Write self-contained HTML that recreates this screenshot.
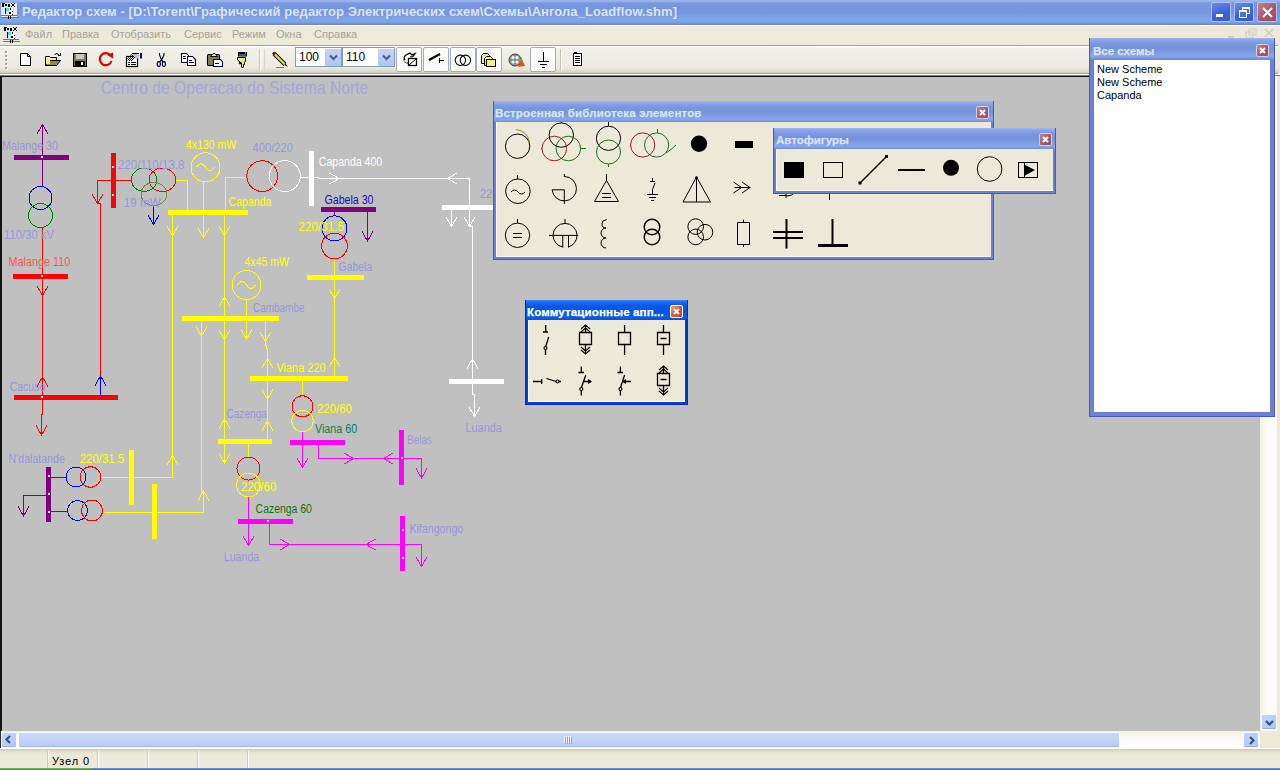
<!DOCTYPE html><html><head><meta charset="utf-8"><style>

*{margin:0;padding:0;box-sizing:border-box}
html,body{width:1280px;height:770px;overflow:hidden;background:#ECE9D8;font-family:"Liberation Sans",sans-serif;position:relative}
.a{position:absolute}
#title{left:0;top:0;width:1280px;height:25px;background:linear-gradient(#9CB8F2 0px,#93AFEE 1.5px,#7A98DC 3px,#7795DE 6px,#7897E0 14px,#7BA0E4 17px,#7AA8E6 19px,#7AA6E6 22px,#7890D6 23.5px,#6E80C0 25px)}
#ttext{left:22px;top:4px;font-weight:bold;font-size:13px;color:#D8E4F8;white-space:nowrap;letter-spacing:0.07px}
.tb{top:2px;width:20px;height:20px;border:1px solid #B0C2F0;border-radius:2px;background:linear-gradient(160deg,#6A8CE8,#3D62D8 55%,#3A5ED0)}
#menu{left:0;top:25px;width:1280px;height:20px;background:linear-gradient(90deg,#ECE9D8,#EEEBDB 50%,#ECE9D8);border-top:1px solid #FFFFFF}
.mi{top:28px;font-size:11px;color:#A5A39A;white-space:nowrap}
#tbar{left:0;top:45px;width:1278px;height:29px;background:linear-gradient(#FFFFFF 0px,#FFFFFF 1px,#F1F0EA 2px,#EFEEE6 50%,#ECEADF 80%,#DAD7C8 96%,#D0CDBC);border-top:1px solid #A6A498;border-bottom:1px solid #ABA898}
#tbline{left:0;top:74px;width:1280px;height:2px;background:linear-gradient(#FFFFFF 50%,#7A7A76 50%)}
#canvas{left:0;top:76px;width:1260px;height:655px;background:#C0C0C0;border-top:1px solid #141414;border-left:2px solid #141414}
#hscroll{left:0;top:731px;width:1260px;height:17px;background:linear-gradient(#F1EFE5,#FBFAF6 40%,#FEFEFC)}
#vscroll{left:1260px;top:76px;width:17px;height:655px;background:linear-gradient(90deg,#F1EFE5,#FBFAF6 40%,#FEFEFC)}
#corner{left:1260px;top:731px;width:18px;height:17px;background:#ECE9D8}
#status{left:0;top:748px;width:1280px;height:20px;background:linear-gradient(#FFFFFF 0px,#FFFFFF 1px,#C8C4B0 1px,#D8D4C2 2px,#E6E3D2 4px,#ECE9D8 7px,#ECE9D8)}
.sep{top:751px;width:2px;height:17px;border-left:1px solid #CFCBB8;border-right:1px solid #FFFFFF}
#taskbar{left:0;top:768px;width:1280px;height:2px;background:linear-gradient(#7FA3E0,#2E56B0)}
.sbtn{width:16px;height:16px;border:1px solid #F8FAFF;border-radius:2px;background:linear-gradient(135deg,#C4D4FA,#B8CCF8 60%,#AEC4F4);box-shadow:inset 0 -1px 0 #9CAED8}
.combo{top:47px;height:20px;background:#fff;border:1px solid #7F9DB9}
.cbtn{top:1px;width:16px;height:17px;background:linear-gradient(#C6D3F7,#B0C4F3);border-radius:1px}
.cval{left:3px;top:2px;font-size:12px;color:#000}
.pbtn{top:47px;width:26px;height:25px;border:1px solid #A4ACB8;border-radius:2px;background:#FBFBFA}

</style></head><body>
<div id="title" class="a"></div>
<svg class="a" style="left:0px;top:0px" width="20" height="21" shape-rendering="crispEdges"><rect x="1" y="3" width="16" height="14" fill="#E8E4EC"/>
<rect x="2" y="3" width="2" height="4" fill="#000"/><rect x="2" y="3" width="3" height="1" fill="#000"/><rect x="5" y="4" width="2" height="2" fill="#000"/><rect x="8" y="4" width="2" height="3" fill="#000"/><rect x="11" y="3" width="1" height="1" fill="#000"/><rect x="14" y="3" width="1" height="1" fill="#000"/><rect x="12" y="4" width="2" height="2" fill="#000"/><rect x="11" y="6" width="1" height="1" fill="#000"/><rect x="14" y="6" width="1" height="1" fill="#000"/>
<rect x="5" y="8" width="1" height="6" fill="#000"/><rect x="6" y="8" width="3" height="6" fill="#40E8C8"/><rect x="6" y="11" width="3" height="3" fill="#C0F4EC"/><rect x="9" y="8" width="4" height="8" fill="#FFFFFF"/><rect x="10" y="8" width="1" height="2" fill="#000"/><rect x="12" y="11" width="1" height="1" fill="#000"/><rect x="9" y="12" width="2" height="2" fill="#000"/><rect x="12" y="14" width="1" height="1" fill="#000"/>
<rect x="1" y="15" width="16" height="1" fill="#E04858"/><rect x="1" y="17" width="17" height="1" fill="#E04858"/><rect x="8" y="16" width="1" height="3" fill="#000"/><rect x="10" y="16" width="1" height="3" fill="#000"/></svg>
<div id="ttext" class="a">Редактор схем - [D:\Torent\Графический редактор Электрических схем\Схемы\Ангола_Loadflow.shm]</div>
<div class="a tb" style="left:1211px"><div class="a" style="left:4px;top:11px;width:7px;height:3px;background:#fff"></div></div>
<div class="a tb" style="left:1234px"><div class="a" style="left:7px;top:4px;width:8px;height:7px;border:1px solid #fff;border-top-width:2px"></div><div class="a" style="left:4px;top:7px;width:8px;height:8px;border:1px solid #fff;border-top-width:2px;background:#4E74DE"></div></div>
<div class="a tb" style="left:1257px;background:linear-gradient(135deg,#C8808E,#A85468 60%,#9A4C64)"><svg class="a" style="left:3px;top:3px" width="13" height="13"><path d="M2,2 L11,11 M11,2 L2,11" stroke="#fff" stroke-width="2"/></svg></div>
<div id="menu" class="a"></div>
<svg class="a" style="left:2px;top:24px" width="20" height="21" shape-rendering="crispEdges"><rect x="1" y="3" width="16" height="14" fill="#E8E4EC"/>
<rect x="2" y="3" width="2" height="4" fill="#000"/><rect x="2" y="3" width="3" height="1" fill="#000"/><rect x="5" y="4" width="2" height="2" fill="#000"/><rect x="8" y="4" width="2" height="3" fill="#000"/><rect x="11" y="3" width="1" height="1" fill="#000"/><rect x="14" y="3" width="1" height="1" fill="#000"/><rect x="12" y="4" width="2" height="2" fill="#000"/><rect x="11" y="6" width="1" height="1" fill="#000"/><rect x="14" y="6" width="1" height="1" fill="#000"/>
<rect x="5" y="8" width="1" height="6" fill="#000"/><rect x="6" y="8" width="3" height="6" fill="#40E8C8"/><rect x="6" y="11" width="3" height="3" fill="#C0F4EC"/><rect x="9" y="8" width="4" height="8" fill="#FFFFFF"/><rect x="10" y="8" width="1" height="2" fill="#000"/><rect x="12" y="11" width="1" height="1" fill="#000"/><rect x="9" y="12" width="2" height="2" fill="#000"/><rect x="12" y="14" width="1" height="1" fill="#000"/>
<rect x="1" y="15" width="16" height="1" fill="#E04858"/><rect x="1" y="17" width="17" height="1" fill="#E04858"/><rect x="8" y="16" width="1" height="3" fill="#000"/><rect x="10" y="16" width="1" height="3" fill="#000"/></svg>
<div class="a mi" style="left:25px">Файл</div>
<div class="a mi" style="left:62px">Правка</div>
<div class="a mi" style="left:111px">Отобразить</div>
<div class="a mi" style="left:184px">Сервис</div>
<div class="a mi" style="left:232px">Режим</div>
<div class="a mi" style="left:276px">Окна</div>
<div class="a mi" style="left:314px">Справка</div>
<svg class="a" style="left:1225px;top:27px" width="52" height="14" opacity="0.28"><rect x="3" y="9" width="6" height="2" fill="#888"/><rect x="24" y="2" width="7" height="6" fill="none" stroke="#888"/><rect x="21" y="5" width="7" height="6" fill="none" stroke="#888"/><path d="M40,2 L48,10 M48,2 L40,10" stroke="#888" stroke-width="1.5"/></svg>
<div id="tbar" class="a"></div><div id="tbline" class="a"></div>
<svg class="a" style="left:5px;top:51px" width="4" height="20" shape-rendering="crispEdges"><rect x="1" y="1" width="2" height="2" fill="#FFFFFF"/><rect x="0" y="0" width="2" height="2" fill="#A8A69A"/><rect x="1" y="5" width="2" height="2" fill="#FFFFFF"/><rect x="0" y="4" width="2" height="2" fill="#A8A69A"/><rect x="1" y="9" width="2" height="2" fill="#FFFFFF"/><rect x="0" y="8" width="2" height="2" fill="#A8A69A"/><rect x="1" y="13" width="2" height="2" fill="#FFFFFF"/><rect x="0" y="12" width="2" height="2" fill="#A8A69A"/><rect x="1" y="17" width="2" height="2" fill="#FFFFFF"/><rect x="0" y="16" width="2" height="2" fill="#A8A69A"/></svg>
<svg class="a" style="left:19px;top:52px" width="14" height="15"><path d="M1.5,1.5 H8.5 L11.5,4.5 V13.5 H1.5 Z" fill="#fff" stroke="#000"/><path d="M8.5,1.5 V4.5 H11.5" fill="none" stroke="#000"/></svg>
<svg class="a" style="left:44px;top:52px" width="18" height="16"><path d="M1.5,4.5 H5.5 L6.5,5.5 H12.5 V8.5" fill="#E8E890" stroke="#000"/><path d="M1.5,4.5 V13.5 H12.5" fill="none" stroke="#000"/><path d="M1.5,13.5 L4.5,8.5 H16.5 L12.5,13.5 Z" fill="#8E9030" stroke="#000"/><rect x="2" y="5" width="4" height="7" fill="#F0F0A0"/><path d="M10.5,2.5 Q13,0 15.5,3.5" fill="none" stroke="#000"/><path d="M14,3.5 H16.5 V1" fill="none" stroke="#000"/></svg>
<svg class="a" style="left:72px;top:52px" width="16" height="16"><rect x="1.5" y="1.5" width="13" height="13" fill="#808040" stroke="#000"/><rect x="4" y="2" width="8" height="5" fill="#C8C8C8"/><rect x="3" y="9" width="10" height="5" fill="#000"/><rect x="9" y="10" width="2" height="3" fill="#fff"/></svg>
<svg class="a" style="left:98px;top:51px" width="17" height="17"><path d="M12.5,4.5 A6,6 0 1,0 13.5,10" fill="none" stroke="#E00000" stroke-width="2.2"/><path d="M9,4 L15,1.5 L15,7.5 Z" fill="#E00000"/></svg>
<svg class="a" style="left:125px;top:52px" width="18" height="16"><defs><pattern id="chk" width="2" height="2" patternUnits="userSpaceOnUse"><rect width="1" height="1" fill="#000"/><rect x="1" y="1" width="1" height="1" fill="#000"/></pattern></defs><rect x="1.5" y="4.5" width="11" height="10" fill="#fff" stroke="#000" stroke-width="1.2"/><path d="M3,10.5 H5 M6,10.5 H11 M3,12.5 H5 M6,12.5 H11" stroke="#000"/><rect x="8" y="1.5" width="6" height="5" fill="#C8C8B0"/><path d="M7,1.5 H14" stroke="#000"/><path d="M2,7 L7,1.5 L10.5,5 L7,9 L3,9 Z" fill="url(#chk)"/><rect x="15" y="1" width="2" height="5.5" fill="#000080"/></svg>
<svg class="a" style="left:156px;top:52px" width="11" height="15"><path d="M3.5,1 V3 L5.5,8 M8,1 V3 L5.5,8 M5.5,8 L3.5,10 M5.5,8 L7.5,10" fill="none" stroke="#000020" stroke-width="1.1"/><ellipse cx="2.8" cy="12" rx="1.6" ry="2.4" fill="none" stroke="#000050" stroke-width="1.1"/><ellipse cx="7.9" cy="12" rx="1.6" ry="2.4" fill="none" stroke="#000050" stroke-width="1.1"/></svg>
<svg class="a" style="left:180px;top:52px" width="17" height="15"><path d="M1.5,1.5 H6.5 L8.5,3.5 V10.5 H1.5 Z" fill="#fff" stroke="#000" stroke-width="1.1"/><path d="M3,4.5 H5.5 M3,6.5 H6" stroke="#000"/><path d="M7.5,4.5 H12.5 L15.5,7.5 V13.5 H7.5 Z" fill="#fff" stroke="#000040" stroke-width="1.1"/><path d="M9,8.5 H12 M9,10.5 H14" stroke="#000030"/></svg>
<svg class="a" style="left:206px;top:52px" width="18" height="16"><rect x="1.5" y="2.5" width="12" height="11" rx="1" fill="#7E7E58" stroke="#000" stroke-width="1.1"/><path d="M4.5,4.5 L7,1.5 H9 L11.5,4.5 Z" fill="#E8E8B0" stroke="#000" stroke-width="0.9"/><path d="M7.5,7.5 H14.5 L16.5,9.5 V14.5 H7.5 Z" fill="#fff" stroke="#000050" stroke-width="1.1"/><path d="M9,11.5 H13" stroke="#000030"/></svg>
<svg class="a" style="left:236px;top:51px" width="12" height="18"><rect x="2" y="1" width="9" height="4.5" fill="#000"/><rect x="3" y="3.5" width="7" height="1" fill="#50D0B0"/><rect x="9" y="1.5" width="1" height="1" fill="#fff"/><path d="M1.5,6.5 H9.5 V10 L8.5,11.5 V13.5 H7.5 V16 L6.5,17 L5.5,16 V12 L4.5,11 V13 H3.5 V10.5 L1.5,9 Z" fill="#EEE880" stroke="#000" stroke-width="1"/></svg>
<svg class="a" style="left:272px;top:51px" width="18" height="18"><path d="M2,2.5 L13,13.5" stroke="#000" stroke-width="4.2" stroke-linecap="butt"/><path d="M2.3,2.8 L13,13.5" stroke="#D8D840" stroke-width="2.4"/><path d="M1,1.5 L3,3.5" stroke="#602020" stroke-width="3"/><path d="M13,12 L16,16 L12.5,14 Z" fill="#000"/><path d="M4,16.5 H12" stroke="#808080"/></svg>
<svg class="a" style="left:572px;top:52px" width="12" height="16"><rect x="1.5" y="1.5" width="8" height="12" fill="#fff" stroke="#000"/><path d="M3,4.5 H8 M3,6.5 H8 M3,8.5 H8 M3,10.5 H8" stroke="#000"/><rect x="2" y="0" width="3" height="2" fill="#000"/></svg>
<div class="a" style="left:259px;top:49px;width:2px;height:22px;border-left:1px solid #C5C2B2;border-right:1px solid #fff"></div>
<div class="a" style="left:264px;top:49px;width:1px;height:22px;background:#DCD9CA"></div>
<div class="a" style="left:560px;top:49px;width:2px;height:22px;border-left:1px solid #C5C2B2;border-right:1px solid #fff"></div>
<div class="a combo" style="left:295px;width:47px"><div class="a cval">100</div><div class="a cbtn" style="left:29px"><svg class="a" style="left:4px;top:5px" width="9" height="7"><path d="M1,1.5 L4.5,5 L8,1.5" fill="none" stroke="#4D6185" stroke-width="2.2"/></svg></div></div>
<div class="a combo" style="left:342px;width:53px"><div class="a cval">110</div><div class="a cbtn" style="left:35px"><svg class="a" style="left:4px;top:5px" width="9" height="7"><path d="M1,1.5 L4.5,5 L8,1.5" fill="none" stroke="#4D6185" stroke-width="2.2"/></svg></div></div>
<div class="a pbtn" style="left:396px"></div>
<div class="a pbtn" style="left:423px"></div>
<div class="a pbtn" style="left:450px"></div>
<div class="a pbtn" style="left:476px"></div>
<div class="a pbtn" style="left:530px"></div>
<svg class="a" style="left:402px;top:51px" width="16" height="17"><path d="M3,9 Q1,6 4,4 L8,2 L10,4 L13,2.5 L11,5.5 L8,6" fill="none" stroke="#000" stroke-width="1.2"/><path d="M2,8 Q2,12 6,12" fill="none" stroke="#000" stroke-width="1.2" stroke-dasharray="1.5,1"/><rect x="6.5" y="7.5" width="8" height="7" fill="#fff" stroke="#000" stroke-width="1.3"/><path d="M7,14 L14,8" stroke="#000"/></svg>
<svg class="a" style="left:427px;top:52px" width="20" height="14"><path d="M2,8 L13,2" stroke="#000" stroke-width="2.2"/><path d="M12.5,6 V11 M12.5,8.5 H17" stroke="#000" stroke-width="1.1"/></svg>
<svg class="a" style="left:453px;top:52px" width="20" height="15"><ellipse cx="7.4" cy="8.3" rx="5.2" ry="5.2" fill="none" stroke="#000" stroke-width="1.05"/><ellipse cx="12.4" cy="8.3" rx="5.2" ry="5.2" fill="none" stroke="#000" stroke-width="1.05"/></svg>
<svg class="a" style="left:480px;top:52px" width="18" height="16"><path d="M1.5,3.5 L3.5,1.5 H7.5 L9.5,3.5 V11.5 H1.5 Z" fill="#F0F090" stroke="#000"/><path d="M4.5,6.5 L6.5,4.5 H10.5 L12.5,6.5 V13.5 H4.5 Z" fill="#F0F090" stroke="#000"/><rect x="6.5" y="7.5" width="9" height="7" fill="#F8F080" stroke="#000"/></svg>
<svg class="a" style="left:508px;top:51px" width="18" height="18"><circle cx="7" cy="9" r="6" fill="#909090" stroke="#404040"/><circle cx="5" cy="6.5" r="1.5" fill="#fff"/><circle cx="9" cy="6.5" r="1.5" fill="#fff"/><circle cx="5" cy="11" r="1.5" fill="#fff"/><circle cx="9" cy="11" r="1.5" fill="#fff"/><path d="M10,16 L13,6 L17,15 Z" fill="#E05020"/><path d="M11,11 L13,6 L15,11 Z" fill="#40B040"/></svg>
<svg class="a" style="left:535px;top:51px" width="16" height="18"><path d="M8.5,1 V10 M3,10.5 H14 M5,13.5 H12 M7,16.5 H10" stroke="#000"/></svg>
<div id="canvas" class="a"></div>
<svg class="a" style="left:0;top:0" width="1280" height="770" shape-rendering="crispEdges"><polyline points="42.5,124 42.5,186" fill="none" stroke="#800080" stroke-width="1"/><polyline points="37.0,134.0 42.5,124.5 48.0,134.0" fill="none" stroke="#800080" stroke-width="1"/><rect x="14" y="155" width="55" height="5" fill="#800080"/><rect x="41" y="156" width="2" height="2" fill="#fff"/><circle cx="40.5" cy="198" r="11.5" fill="none" stroke="#0000FF"/><circle cx="40.5" cy="215.5" r="12" fill="none" stroke="#008000"/><polyline points="42.5,227.5 42.5,274" fill="none" stroke="#FF0000" stroke-width="1"/><rect x="13" y="274" width="55" height="5" fill="#FF0000"/><rect x="41" y="275" width="2" height="2" fill="#fff"/><polyline points="42.5,279 42.5,395" fill="none" stroke="#FF0000" stroke-width="1"/><polyline points="37.0,286.0 42.5,295.5 48.0,286.0" fill="none" stroke="#FF0000" stroke-width="1"/><polyline points="37.0,386.5 42.5,377 48.0,386.5" fill="none" stroke="#FF0000" stroke-width="1"/><rect x="14" y="395" width="104" height="5" fill="#FF0000"/><rect x="41" y="396" width="2" height="2" fill="#fff"/><polyline points="42.5,400 42.5,414 41.5,414 41.5,435" fill="none" stroke="#FF0000" stroke-width="1"/><polyline points="36.0,425.5 41.5,435 47.0,425.5" fill="none" stroke="#FF0000" stroke-width="1"/><rect x="111" y="153" width="5" height="55" fill="#FF0000"/><rect x="112" y="166" width="2" height="2" fill="#fff"/><rect x="112" y="194" width="2" height="2" fill="#fff"/><polyline points="131.4,180.5 97.5,180.5 97.5,203.5 100.5,203.5 100.5,376" fill="none" stroke="#FF0000" stroke-width="1"/><polyline points="92.0,194.0 97.5,203.5 103.0,194.0" fill="none" stroke="#FF0000" stroke-width="1"/><polyline points="100.5,376 100.5,395" fill="none" stroke="#0000FF" stroke-width="1"/><polyline points="95.0,385.5 100.5,376 106.0,385.5" fill="none" stroke="#0000FF" stroke-width="1"/><ellipse cx="144.1" cy="179.8" rx="12.7" ry="11.6" fill="none" stroke="#008000"/><ellipse cx="162.4" cy="179.8" rx="13.4" ry="11.6" fill="none" stroke="#FF0000"/><ellipse cx="153.9" cy="194" rx="12.9" ry="11.5" fill="none" stroke="#708C40"/><polyline points="153.5,205.5 153.5,224.5" fill="none" stroke="#0000FF" stroke-width="1"/><polyline points="148.0,215.0 153.5,224.5 159.0,215.0" fill="none" stroke="#0000FF" stroke-width="1"/><polyline points="176,180.5 187.5,180.5 187.5,210" fill="none" stroke="#FFFF00" stroke-width="1"/><circle cx="205.5" cy="167.3" r="14.5" fill="none" stroke="#FFFF00"/><path d="M196.5,167.3 q4.5,-7 9,0 t9,0" fill="none" stroke="#FFFF00"/><polyline points="203.5,181.6 203.5,210" fill="none" stroke="#FFFF00" stroke-width="1"/><polyline points="246.8,177.5 225.5,177.5 225.5,210" fill="none" stroke="#FFFF00" stroke-width="1"/><circle cx="262.2" cy="176.1" r="15.4" fill="none" stroke="#FF0000"/><circle cx="284.8" cy="176.1" r="15.5" fill="none" stroke="#FFFFFF"/><polyline points="300.5,177.5 319,177.5" fill="none" stroke="#FFFFFF" stroke-width="1"/><polyline points="319,178.5 469.5,178.5 469.5,226.5 472.5,226.5 472.5,394.5 474.5,394.5 474.5,416.5" fill="none" stroke="#FFFFFF" stroke-width="1"/><rect x="309" y="151" width="5" height="55" fill="#FFFFFF"/><polyline points="329.5,173.0 339,178.5 329.5,184.0" fill="none" stroke="#FFFFFF" stroke-width="1"/><polyline points="457.0,173.0 447.5,178.5 457.0,184.0" fill="none" stroke="#FFFFFF" stroke-width="1"/><polyline points="464.0,217.0 469.5,226.5 475.0,217.0" fill="none" stroke="#FFFFFF" stroke-width="1"/><polyline points="467.0,368.5 472.5,359 478.0,368.5" fill="none" stroke="#FFFFFF" stroke-width="1"/><polyline points="469.0,407.0 474.5,416.5 480.0,407.0" fill="none" stroke="#FFFFFF" stroke-width="1"/><rect x="442" y="205" width="52" height="5" fill="#FFFFFF"/><polyline points="451.5,210 451.5,226.5" fill="none" stroke="#FFFFFF" stroke-width="1"/><polyline points="446.0,217.0 451.5,226.5 457.0,217.0" fill="none" stroke="#FFFFFF" stroke-width="1"/><rect x="449" y="379" width="55" height="5" fill="#FFFFFF"/><rect x="168" y="210" width="80" height="5" fill="#FFFF00"/><polyline points="172.5,215 172.5,477" fill="none" stroke="#FFFF00" stroke-width="1"/><polyline points="167.0,226.0 172.5,235.5 178.0,226.0" fill="none" stroke="#FFFF00" stroke-width="1"/><polyline points="167.0,465.0 172.5,455.5 178.0,465.0" fill="none" stroke="#FFFF00" stroke-width="1"/><polyline points="203.5,215 203.5,237.5" fill="none" stroke="#FFFF00" stroke-width="1"/><polyline points="198.0,228.0 203.5,237.5 209.0,228.0" fill="none" stroke="#FFFF00" stroke-width="1"/><polyline points="224.5,215 224.5,463" fill="none" stroke="#FFFF00" stroke-width="1"/><polyline points="219.0,226.0 224.5,235.5 230.0,226.0" fill="none" stroke="#FFFF00" stroke-width="1"/><polyline points="219.0,306.5 224.5,297 230.0,306.5" fill="none" stroke="#FFFF00" stroke-width="1"/><polyline points="219.0,330.0 224.5,339.5 230.0,330.0" fill="none" stroke="#FFFF00" stroke-width="1"/><polyline points="219.0,428.5 224.5,419 230.0,428.5" fill="none" stroke="#FFFF00" stroke-width="1"/><polyline points="219.0,453.5 224.5,463 230.0,453.5" fill="none" stroke="#FFFF00" stroke-width="1"/><rect x="182" y="316" width="97" height="5" fill="#FFFF00"/><circle cx="246.5" cy="285" r="14.5" fill="none" stroke="#FFFF00"/><path d="M237.5,285 q4.5,-7 9,0 t9,0" fill="none" stroke="#FFFF00"/><polyline points="246.5,299.5 246.5,339" fill="none" stroke="#FFFF00" stroke-width="1"/><polyline points="241.0,329.5 246.5,339 252.0,329.5" fill="none" stroke="#FFFF00" stroke-width="1"/><polyline points="201.5,321 201.5,491 203.5,491 203.5,512.5" fill="none" stroke="#FFFF00" stroke-width="1"/><polyline points="196.0,326.5 201.5,336 207.0,326.5" fill="none" stroke="#FFFF00" stroke-width="1"/><polyline points="198.0,500.5 203.5,491 209.0,500.5" fill="none" stroke="#FFFF00" stroke-width="1"/><polyline points="265.5,321 265.5,344 267.5,350 267.5,376" fill="none" stroke="#FFFF00" stroke-width="1"/><polyline points="260.0,332.0 265.5,341.5 271.0,332.0" fill="none" stroke="#FFFF00" stroke-width="1"/><polyline points="262.0,368.0 267.5,358.5 273.0,368.0" fill="none" stroke="#FFFF00" stroke-width="1"/><rect x="250" y="376" width="98" height="5" fill="#FFFF00"/><polyline points="334.5,280 334.5,376" fill="none" stroke="#FFFF00" stroke-width="1"/><polyline points="329.0,289.0 334.5,298.5 340.0,289.0" fill="none" stroke="#FFFF00" stroke-width="1"/><polyline points="329.0,367.0 334.5,357.5 340.0,367.0" fill="none" stroke="#FFFF00" stroke-width="1"/><polyline points="267.5,381 267.5,439" fill="none" stroke="#FFFF00" stroke-width="1"/><polyline points="262.0,389.5 267.5,399 273.0,389.5" fill="none" stroke="#FFFF00" stroke-width="1"/><polyline points="262.0,430.5 267.5,421 273.0,430.5" fill="none" stroke="#FFFF00" stroke-width="1"/><polyline points="302.5,381 302.5,396" fill="none" stroke="#FFFF00" stroke-width="1"/><circle cx="302.5" cy="406.3" r="10.5" fill="none" stroke="#FF0000"/><circle cx="302.5" cy="421" r="10.7" fill="none" stroke="#FFFF00"/><polyline points="302.5,431.7 302.5,468" fill="none" stroke="#FF00FF" stroke-width="1"/><polyline points="297.0,458.0 302.5,467.5 308.0,458.0" fill="none" stroke="#FF00FF" stroke-width="1"/><rect x="290" y="440" width="55" height="5" fill="#FF00FF"/><polyline points="318.5,445 318.5,458.5 421.5,458.5 421.5,478" fill="none" stroke="#FF00FF" stroke-width="1"/><polyline points="344.0,453.0 353.5,458.5 344.0,464.0" fill="none" stroke="#FF00FF" stroke-width="1"/><polyline points="393.0,453.0 383.5,458.5 393.0,464.0" fill="none" stroke="#FF00FF" stroke-width="1"/><polyline points="416.0,468.5 421.5,478 427.0,468.5" fill="none" stroke="#FF00FF" stroke-width="1"/><rect x="399" y="430" width="5" height="55" fill="#FF00FF"/><rect x="401" y="457" width="2" height="2" fill="#fff"/><rect x="218" y="439" width="54" height="5" fill="#FFFF00"/><polyline points="248.5,444 248.5,457" fill="none" stroke="#FFFF00" stroke-width="1"/><circle cx="248.5" cy="468.5" r="11.5" fill="none" stroke="#FF0000"/><circle cx="248.5" cy="485" r="12" fill="none" stroke="#FFFF00"/><polyline points="248.5,497 248.5,545.5" fill="none" stroke="#FF00FF" stroke-width="1"/><polyline points="243.0,536.0 248.5,545.5 254.0,536.0" fill="none" stroke="#FF00FF" stroke-width="1"/><rect x="238" y="519" width="55" height="5" fill="#FF00FF"/><rect x="267" y="520" width="2" height="2" fill="#fff"/><polyline points="269.5,524 269.5,544.5 421.5,544.5 421.5,566.5" fill="none" stroke="#FF00FF" stroke-width="1"/><polyline points="280.0,539.0 289.5,544.5 280.0,550.0" fill="none" stroke="#FF00FF" stroke-width="1"/><polyline points="375.5,539.0 366,544.5 375.5,550.0" fill="none" stroke="#FF00FF" stroke-width="1"/><polyline points="416.0,557.0 421.5,566.5 427.0,557.0" fill="none" stroke="#FF00FF" stroke-width="1"/><rect x="400" y="516" width="5" height="55" fill="#FF00FF"/><rect x="402" y="529" width="2" height="2" fill="#fff"/><rect x="402" y="557" width="2" height="2" fill="#fff"/><rect x="321" y="207" width="55" height="5" fill="#800080"/><polyline points="334.5,212 334.5,216" fill="none" stroke="#800080" stroke-width="1"/><circle cx="334.5" cy="228.4" r="12.5" fill="none" stroke="#0000FF"/><circle cx="334.5" cy="246" r="12.8" fill="none" stroke="#FF0000"/><polyline points="367.5,212 367.5,241" fill="none" stroke="#800080" stroke-width="1"/><polyline points="362.0,231.5 367.5,241 373.0,231.5" fill="none" stroke="#800080" stroke-width="1"/><polyline points="334.5,259 334.5,280" fill="none" stroke="#FFFF00" stroke-width="1"/><rect x="307" y="275" width="57" height="5" fill="#FFFF00"/><rect x="46" y="467" width="5" height="55" fill="#800080"/><rect x="48" y="475" width="2" height="2" fill="#fff"/><rect x="48" y="493" width="2" height="2" fill="#fff"/><rect x="48" y="511" width="2" height="2" fill="#fff"/><polyline points="51,477.5 66,477.5" fill="none" stroke="#800080" stroke-width="1"/><circle cx="76" cy="477" r="10" fill="none" stroke="#0000FF"/><circle cx="90.4" cy="477" r="10.3" fill="none" stroke="#FF0000"/><polyline points="101,477.5 172.5,477.5" fill="none" stroke="#FFFF00" stroke-width="1"/><rect x="129" y="450" width="5" height="55" fill="#FFFF00"/><rect x="152" y="484" width="5" height="55" fill="#FFFF00"/><polyline points="46,495.5 23.5,495.5 23.5,516" fill="none" stroke="#800080" stroke-width="1"/><polyline points="18.0,506.5 23.5,516 29.0,506.5" fill="none" stroke="#800080" stroke-width="1"/><polyline points="51,511.5 67,511.5" fill="none" stroke="#800080" stroke-width="1"/><circle cx="77.5" cy="510.5" r="10" fill="none" stroke="#0000FF"/><circle cx="92" cy="510.5" r="10.5" fill="none" stroke="#FF0000"/><polyline points="102.5,512.5 203.5,512.5" fill="none" stroke="#FFFF00" stroke-width="1"/><g font-family="Liberation Sans" shape-rendering="auto"><text x="100.8" y="93.6" fill="#A6A6D8" font-size="17.5" textLength="267.5" lengthAdjust="spacingAndGlyphs">Centro de Operacao do Sistema Norte</text><text x="2" y="150.3" fill="#9696DA" font-size="12" textLength="56" lengthAdjust="spacingAndGlyphs">Malange 30</text><text x="4" y="239" fill="#9696DA" font-size="12" textLength="50" lengthAdjust="spacingAndGlyphs">110/30 kV</text><text x="8.6" y="266" fill="#F05858" font-size="12" textLength="61.7" lengthAdjust="spacingAndGlyphs">Malange 110</text><text x="118" y="168.6" fill="#9696DA" font-size="12" textLength="66.4" lengthAdjust="spacingAndGlyphs">220/110/13.8</text><text x="123.7" y="207.4" fill="#9696DA" font-size="12" textLength="37" lengthAdjust="spacingAndGlyphs">19 mW</text><text x="186" y="149.3" fill="#FFFF00" font-size="12" textLength="50.2" lengthAdjust="spacingAndGlyphs">4x130 mW</text><text x="252.6" y="151.7" fill="#9696DA" font-size="12" textLength="40.4" lengthAdjust="spacingAndGlyphs">400/220</text><text x="318.75" y="166.3" fill="#FFFFFF" font-size="12" textLength="63.5" lengthAdjust="spacingAndGlyphs">Capanda 400</text><text x="228.6" y="206" fill="#FFFF00" font-size="12" textLength="42.8" lengthAdjust="spacingAndGlyphs">Capanda</text><text x="324.5" y="203.75" fill="#1010D0" font-size="12" textLength="49" lengthAdjust="spacingAndGlyphs">Gabela 30</text><text x="298.4" y="231.25" fill="#FFFF00" font-size="12" textLength="45.6" lengthAdjust="spacingAndGlyphs">220/31.5</text><text x="338.6" y="271" fill="#9696DA" font-size="12" textLength="33.6" lengthAdjust="spacingAndGlyphs">Gabela</text><text x="479.7" y="197.5" fill="#9696DA" font-size="12" textLength="35" lengthAdjust="spacingAndGlyphs">220/60</text><text x="244.5" y="265.8" fill="#FFFF00" font-size="12" textLength="44.5" lengthAdjust="spacingAndGlyphs">4x45 mW</text><text x="253" y="311.6" fill="#9696DA" font-size="12" textLength="51.5" lengthAdjust="spacingAndGlyphs">Cambambe</text><text x="276.4" y="371.6" fill="#FFFF00" font-size="12" textLength="49.2" lengthAdjust="spacingAndGlyphs">Viana 220</text><text x="9.7" y="391" fill="#9696DA" font-size="12" textLength="35.6" lengthAdjust="spacingAndGlyphs">Cacuso</text><text x="226.4" y="418" fill="#9696DA" font-size="12" textLength="40.6" lengthAdjust="spacingAndGlyphs">Cazenga</text><text x="317" y="413" fill="#FFFF00" font-size="12" textLength="34.9" lengthAdjust="spacingAndGlyphs">220/60</text><text x="315" y="433.4" fill="#107A50" font-size="12" textLength="42.2" lengthAdjust="spacingAndGlyphs">Viana 60</text><text x="407" y="444" fill="#9696DA" font-size="12" textLength="25" lengthAdjust="spacingAndGlyphs">Belas</text><text x="465.5" y="431.8" fill="#9696DA" font-size="12" textLength="36.3" lengthAdjust="spacingAndGlyphs">Luanda</text><text x="8.6" y="462.7" fill="#9696DA" font-size="12" textLength="56.2" lengthAdjust="spacingAndGlyphs">N'dalatande</text><text x="79.7" y="462.7" fill="#FFFF00" font-size="12" textLength="44.5" lengthAdjust="spacingAndGlyphs">220/31.5</text><text x="241" y="491" fill="#FFFF00" font-size="12" textLength="35.4" lengthAdjust="spacingAndGlyphs">220/60</text><text x="255.6" y="512.8" fill="#107010" font-size="12" textLength="56.3" lengthAdjust="spacingAndGlyphs">Cazenga 60</text><text x="223.75" y="560.5" fill="#9696DA" font-size="12" textLength="35.5" lengthAdjust="spacingAndGlyphs">Luanda</text><text x="409.4" y="532.5" fill="#9696DA" font-size="12" textLength="53.9" lengthAdjust="spacingAndGlyphs">Kifangongo</text></g></svg>
<div id="hscroll" class="a"></div><div id="vscroll" class="a"></div><div id="corner" class="a"></div>
<div class="a sbtn" style="left:1px;top:732px"><svg class="a" style="left:2px;top:2px" width="9" height="9"><path d="M6,1 L2.5,4.5 L6,8" fill="none" stroke="#34508C" stroke-width="2.2"/></svg></div>
<div class="a" style="left:0;top:731px;width:1px;height:17px;background:#303030"></div>
<div class="a" style="left:18px;top:732px;width:1102px;height:16px;border:1px solid #F8FAFF;border-radius:2px;background:linear-gradient(#CDD6F6,#C4D2F8 50%,#B6CCFA);box-shadow:inset 0 -1px 0 #A4B4DC"></div>
<svg class="a" style="left:564px;top:735px" width="10" height="9" shape-rendering="crispEdges"><rect x="0" y="1" width="1" height="7" fill="#EEF4FE"/><rect x="1" y="2" width="1" height="7" fill="#8CA6E6"/><rect x="2" y="1" width="1" height="7" fill="#EEF4FE"/><rect x="3" y="2" width="1" height="7" fill="#8CA6E6"/><rect x="4" y="1" width="1" height="7" fill="#EEF4FE"/><rect x="5" y="2" width="1" height="7" fill="#8CA6E6"/><rect x="6" y="1" width="1" height="7" fill="#EEF4FE"/><rect x="7" y="2" width="1" height="7" fill="#8CA6E6"/></svg>
<div class="a sbtn" style="left:1243px;top:732px"><svg class="a" style="left:3px;top:3px" width="9" height="9"><path d="M3,1 L6.5,4.5 L3,8" fill="none" stroke="#34508C" stroke-width="2.2"/></svg></div>
<div class="a sbtn" style="left:1261px;top:714px"><svg class="a" style="left:3px;top:3px" width="9" height="9"><path d="M1,3 L4.5,6.5 L8,3" fill="none" stroke="#34508C" stroke-width="2.2"/></svg></div>
<div id="status" class="a"></div>
<div class="a sep" style="left:47px"></div>
<div class="a sep" style="left:97px"></div>
<div class="a sep" style="left:147px"></div>
<div class="a sep" style="left:197px"></div>
<div class="a sep" style="left:247px"></div>
<div class="a" style="left:52px;top:755px;font-size:11px;letter-spacing:0.9px;color:#000;white-space:nowrap">Узел 0</div>
<div id="taskbar" class="a"></div>
<div class="a" style="left:0;top:768px;width:91px;height:2px;background:linear-gradient(#7FC070,#3A8A2A)"></div>
<div class="a" style="left:493px;top:101px;width:501px;height:159px;background:#6E80D4;border:1px solid #4E58B8;border-top:none;border-radius:1px 1px 0 0"></div>
<div class="a" style="left:493px;top:101px;width:501px;height:21px;background:linear-gradient(#9FB6EE 0px,#8AA6E8 2px,#7A96DF 6px,#7692DD 11px,#7E9DE3 15px,#88A7EA 18px,#7D9AE2 20px,#6E88D8 21px);border-radius:1px 1px 0 0;border-left:1px solid #4E58B8;border-right:1px solid #4E58B8"></div>
<div class="a" style="left:496px;top:122px;width:495px;height:135px;background:#ECE9D8;box-shadow:inset 1px -1px 0 #FAF8F0"></div>
<div class="a" style="left:495px;top:107px;font-size:11.5px;font-weight:bold;color:#D8E4F8;white-space:nowrap;letter-spacing:0.17px;-webkit-text-stroke:0.25px #D8E4F8">Встроенная библиотека элементов</div>
<div class="a" style="left:976px;top:106px;width:13px;height:13px;border:1px solid #D8C8E0;border-radius:2px;background:linear-gradient(135deg,#B98790,#9E5B66 60%,#8F5060)"><svg class="a" style="left:0;top:0" width="11" height="11"><path d="M3,3 L8,8 M8,3 L3,8" stroke="#fff" stroke-width="2"/></svg></div>
<svg class="a" style="left:0;top:0" width="1280" height="770"><circle cx="517.6" cy="146.2" r="12.2" fill="none" stroke="#000" stroke-width="1"/><path d="M516,129.5 Q527,131 529.5,141.5" fill="none" stroke="#909020" stroke-width="1"/><circle cx="561.3" cy="135.1" r="12.2" fill="none" stroke="#000" stroke-width="1"/><path d="M561.3,122 V123" fill="none" stroke="#000" stroke-width="1"/><circle cx="554.3" cy="148.5" r="12.3" fill="none" stroke="#902020" stroke-width="1"/><circle cx="568.3" cy="148.5" r="12.3" fill="none" stroke="#207020" stroke-width="1"/><path d="M541.5,148.5 H542" fill="none" stroke="#000" stroke-width="1"/><path d="M580.5,148.5 H586" fill="none" stroke="#207020" stroke-width="1"/><circle cx="608.5" cy="138.3" r="12.1" fill="none" stroke="#000" stroke-width="1"/><path d="M608.5,122 V126" fill="none" stroke="#000" stroke-width="1"/><circle cx="608.5" cy="152" r="12" fill="none" stroke="#207020" stroke-width="1"/><path d="M608.5,164 V167" fill="none" stroke="#207020" stroke-width="1"/><circle cx="642.7" cy="145" r="12.1" fill="none" stroke="#902020" stroke-width="1"/><circle cx="656.6" cy="145" r="12.1" fill="none" stroke="#207020" stroke-width="1"/><path d="M657.5,129 V133" fill="none" stroke="#207020" stroke-width="1"/><path d="M666,153 Q671,150 676,145" fill="none" stroke="#207020" stroke-width="1"/><circle cx="699" cy="143.7" r="8.2" fill="#000"/><rect x="735" y="141" width="18" height="7" fill="#000"/><circle cx="517.9" cy="191.2" r="12.3" fill="none" stroke="#000" stroke-width="1"/><path d="M517.5,175 V179" fill="none" stroke="#000" stroke-width="1"/><path d="M511,192 q3.5,-4 7,0 t7,0" fill="none" stroke="#000" stroke-width="1"/><path d="M564.3,174 V176.5 A12.2,12.2 0 1,1 552.1,189.8 H564.3 V204" fill="none" stroke="#000" stroke-width="1"/><path d="M606.5,174 V180.5 L594.5,201.5 H618.5 L606.5,180.5" fill="none" stroke="#000" stroke-width="1"/><path d="M602,193.5 H611 M602,197.5 H611" fill="none" stroke="#000" stroke-width="1"/><path d="M650,181.5 H655 M652.5,178 V181.5 M655,183 L652.5,189.5 V194.5 M647,194.5 H658 M649,197.5 H656 M651,200.5 H654" fill="none" stroke="#000" stroke-width="1"/><path d="M696.5,177 L683,202 H710.5 Z M696.5,177 V202" fill="none" stroke="#000" stroke-width="1"/><circle cx="696.5" cy="177.5" r="1.3" fill="#000"/><path d="M734.5,187.5 H750.5 M733.5,182 L741.5,187.5 L733.5,193 M742,182 L750,187.5 L742,193" fill="none" stroke="#000" stroke-width="1"/><path d="M779,195.5 H787 M786,193 V198 M787,196 Q792,196 794,193" fill="none" stroke="#000" stroke-width="1"/><path d="M829.5,193 V200" fill="none" stroke="#000" stroke-width="1"/><circle cx="517.5" cy="235.3" r="12.2" fill="none" stroke="#000" stroke-width="1"/><path d="M517.5,219 V223" fill="none" stroke="#000" stroke-width="1"/><path d="M513,233.5 H522 M513,237.5 H522" fill="none" stroke="#000" stroke-width="1"/><path d="M565,219 V223 M553,235.4 A12,12 0 0,1 577,235.4 M549,235.4 H578 M562.75,235.4 V247.5 M568.5,235.4 V247.5 M553,235.4 A12,12 0 0,0 562.75,247 M568.5,247 A12,12 0 0,0 577,235.4" fill="none" stroke="#000" stroke-width="1"/><path d="M606,219 V220 A3.5,3.5 0 0,0 606,228 A3.5,3.5 0 0,0 606,238 A3.5,3.5 0 0,0 606,248" fill="none" stroke="#000" stroke-width="1"/><circle cx="652" cy="227" r="7.8" fill="none" stroke="#000" stroke-width="1.4"/><circle cx="652" cy="237" r="7.8" fill="none" stroke="#000" stroke-width="1.4"/><circle cx="695.7" cy="226.6" r="7.8" fill="none" stroke="#000" stroke-width="1"/><circle cx="695.7" cy="236.9" r="7.8" fill="none" stroke="#000" stroke-width="1"/><circle cx="705" cy="232.2" r="7.8" fill="none" stroke="#000" stroke-width="1"/><path d="M737.5,222.5 H749.5 V244.5 H737.5 Z M743.5,219.5 V222.5 M743.5,244.5 V247" fill="none" stroke="#000" stroke-width="1"/><path d="M786.5,219 V248.5 M773,232 H803 M773,238 H803" fill="none" stroke="#000" stroke-width="2"/><path d="M832.5,219 V245 M818,245.5 H848" fill="none" stroke="#000" stroke-width="2"/><rect x="818" y="244" width="30" height="3" fill="#000"/></svg>
<div class="a" style="left:773px;top:128px;width:283px;height:66px;background:#6E80D4;border:1px solid #4E58B8;border-top:none;border-radius:1px 1px 0 0"></div>
<div class="a" style="left:773px;top:128px;width:283px;height:21px;background:linear-gradient(#9FB6EE 0px,#8AA6E8 2px,#7A96DF 6px,#7692DD 11px,#7E9DE3 15px,#88A7EA 18px,#7D9AE2 20px,#6E88D8 21px);border-radius:1px 1px 0 0;border-left:1px solid #4E58B8;border-right:1px solid #4E58B8"></div>
<div class="a" style="left:776px;top:149px;width:277px;height:42px;background:#ECE9D8;box-shadow:inset 1px -1px 0 #FAF8F0"></div>
<div class="a" style="left:776px;top:134px;font-size:11.5px;font-weight:bold;color:#D8E4F8;white-space:nowrap;letter-spacing:0px;-webkit-text-stroke:0.25px #D8E4F8">Автофигуры</div>
<div class="a" style="left:1039px;top:133px;width:13px;height:13px;border:1px solid #D8C8E0;border-radius:2px;background:linear-gradient(135deg,#B98790,#9E5B66 60%,#8F5060)"><svg class="a" style="left:0;top:0" width="11" height="11"><path d="M3,3 L8,8 M8,3 L3,8" stroke="#fff" stroke-width="2"/></svg></div>
<svg class="a" style="left:0;top:0" width="1280" height="770"><rect x="784" y="162" width="20" height="16" fill="#000"/><rect x="823.5" y="162.5" width="19" height="15" fill="none" stroke="#000"/><path d="M860,183 L886.5,156.5" stroke="#000" stroke-width="1.4"/><rect x="858.5" y="181.5" width="3" height="3" fill="#000"/><rect x="885" y="155" width="3" height="3" fill="#000"/><rect x="898" y="169" width="27" height="2" fill="#000"/><circle cx="951" cy="167.8" r="8" fill="#000"/><circle cx="989.6" cy="169" r="12.3" fill="none" stroke="#000"/><rect x="1018.5" y="162.5" width="19" height="15" fill="none" stroke="#000"/><path d="M1024.5,162.5 V177.5" stroke="#000"/><path d="M1025,165 L1035,170 L1025,175.5 Z" fill="#000"/></svg>
<div class="a" style="left:525px;top:300px;width:163px;height:105px;background:#0B3FD8;border:1px solid #0A2AA0;border-top:none;border-radius:1px 1px 0 0"></div>
<div class="a" style="left:525px;top:300px;width:163px;height:20px;background:linear-gradient(#3A8CFF 0px,#1C6CF6 2px,#0758E8 6px,#0654E2 12px,#0A5DEB 16px,#0B56E0 19px,#0640C8 21px);border-radius:1px 1px 0 0;border-left:1px solid #0A2AA0;border-right:1px solid #0A2AA0"></div>
<div class="a" style="left:528px;top:320px;width:157px;height:82px;background:#ECE9D8;box-shadow:inset 1px -1px 0 #FAF8F0"></div>
<div class="a" style="left:527px;top:306px;font-size:11.5px;font-weight:bold;color:#FFFFFF;white-space:nowrap;letter-spacing:0.15px;-webkit-text-stroke:0.25px #FFFFFF">Коммутационные апп...</div>
<div class="a" style="left:670px;top:305px;width:13px;height:13px;border:1px solid #FFFFFF;border-radius:2px;background:linear-gradient(135deg,#F2A58A,#E0542A 50%,#C8401E)"><svg class="a" style="left:0;top:0" width="11" height="11"><path d="M3,3 L8,8 M8,3 L3,8" stroke="#fff" stroke-width="2"/></svg></div>
<svg class="a" style="left:0;top:0" width="1280" height="770"><path d="M543,332 H548 M545.7,325 V332 M548.7,337 L545.7,346.5 M545.5,349.5 V355" fill="none" stroke="#000" stroke-width="1.3"/><circle cx="545.5" cy="348" r="1.5" fill="none" stroke="#000" stroke-width="1.2"/><path d="M585.5,325 V332.5 M585.5,344.5 V353.5" fill="none" stroke="#000" stroke-width="1.3"/><path d="M579.5,332.5 H591.5 V344.5 H579.5 Z" fill="none" stroke="#000" stroke-width="1.3"/><path d="M581,329 L585.5,325 L590,329 M581,332 L585.5,328 L590,332 M581,347 L585.5,351 L590,347 M581,350 L585.5,354 L590,350" fill="none" stroke="#000" stroke-width="1.1"/><path d="M624.6,325 V332.5 M624.6,344.5 V355" fill="none" stroke="#000" stroke-width="1.3"/><path d="M618.5,332.5 H630.5 V344.5 H618.5 Z" fill="none" stroke="#000" stroke-width="1.3"/><path d="M663.5,325 V332.5 M663.5,344.5 V355" fill="none" stroke="#000" stroke-width="1.3"/><path d="M657.5,332.5 H669.5 V344.5 H657.5 Z M660.5,338.5 H666.5" fill="none" stroke="#000" stroke-width="1.3"/><path d="M533,381.5 H541.7 M541.7,379 V384 M546.5,378.5 L556,381.5 M559,381.5 H561" fill="none" stroke="#000" stroke-width="1.3"/><circle cx="557.5" cy="381.5" r="1.5" fill="none" stroke="#000" stroke-width="1.2"/><path d="M578.5,372.5 H584 M581.3,366.5 V372.5 M585.8,375 L581.3,387.7 M581.3,390.5 V395.5 M584,381.5 H591" fill="none" stroke="#000" stroke-width="1.3"/><circle cx="581.3" cy="389" r="1.5" fill="none" stroke="#000" stroke-width="1.2"/><path d="M588,379 L592,381.5 L588,384 Z" fill="#000"/><path d="M617.5,372.5 H623 M620.4,366.5 V372.5 M624.6,375 L620.4,387.7 M620.4,390.5 V395.5 M623,381.5 H631" fill="none" stroke="#000" stroke-width="1.3"/><circle cx="620.4" cy="389" r="1.5" fill="none" stroke="#000" stroke-width="1.2"/><path d="M622,381.5 L626,379 L626,384 Z" fill="#000"/><path d="M657.5,373.5 H669.5 V385.5 H657.5 Z M660.5,379.5 H666.5 M663.5,366 V373.5 M663.5,385.5 V395" fill="none" stroke="#000" stroke-width="1.3"/><path d="M659,370 L663.5,366 L668,370 M659,373 L663.5,369 L668,373 M659,388 L663.5,392 L668,388 M659,391 L663.5,395 L668,391" fill="none" stroke="#000" stroke-width="1.1"/></svg>
<div class="a" style="left:1089px;top:38px;width:186px;height:379px;background:#6E80D4;border:1px solid #4E58B8;border-top:none;border-radius:1px 1px 0 0"></div>
<div class="a" style="left:1089px;top:38px;width:186px;height:22px;background:linear-gradient(#9FB6EE 0px,#8AA6E8 2px,#7A96DF 6px,#7692DD 11px,#7E9DE3 15px,#88A7EA 18px,#7D9AE2 20px,#6E88D8 21px);border-radius:1px 1px 0 0;border-left:1px solid #4E58B8;border-right:1px solid #4E58B8"></div>
<div class="a" style="left:1094px;top:60px;width:176px;height:352px;background:#FFFFFF;box-shadow:inset 1px -1px 0 #FAF8F0"></div>
<div class="a" style="left:1093px;top:45px;font-size:11.5px;font-weight:bold;color:#D8E4F8;white-space:nowrap;letter-spacing:0px;-webkit-text-stroke:0.25px #D8E4F8">Все схемы</div>
<div class="a" style="left:1256px;top:44px;width:13px;height:13px;border:1px solid #D8C8E0;border-radius:2px;background:linear-gradient(135deg,#B98790,#9E5B66 60%,#8F5060)"><svg class="a" style="left:0;top:0" width="11" height="11"><path d="M3,3 L8,8 M8,3 L3,8" stroke="#fff" stroke-width="2"/></svg></div>
<div class="a" style="left:1097px;top:63px;font-size:11px;line-height:13px;color:#000">New Scheme<br>New Scheme<br>Capanda</div>
</body></html>
